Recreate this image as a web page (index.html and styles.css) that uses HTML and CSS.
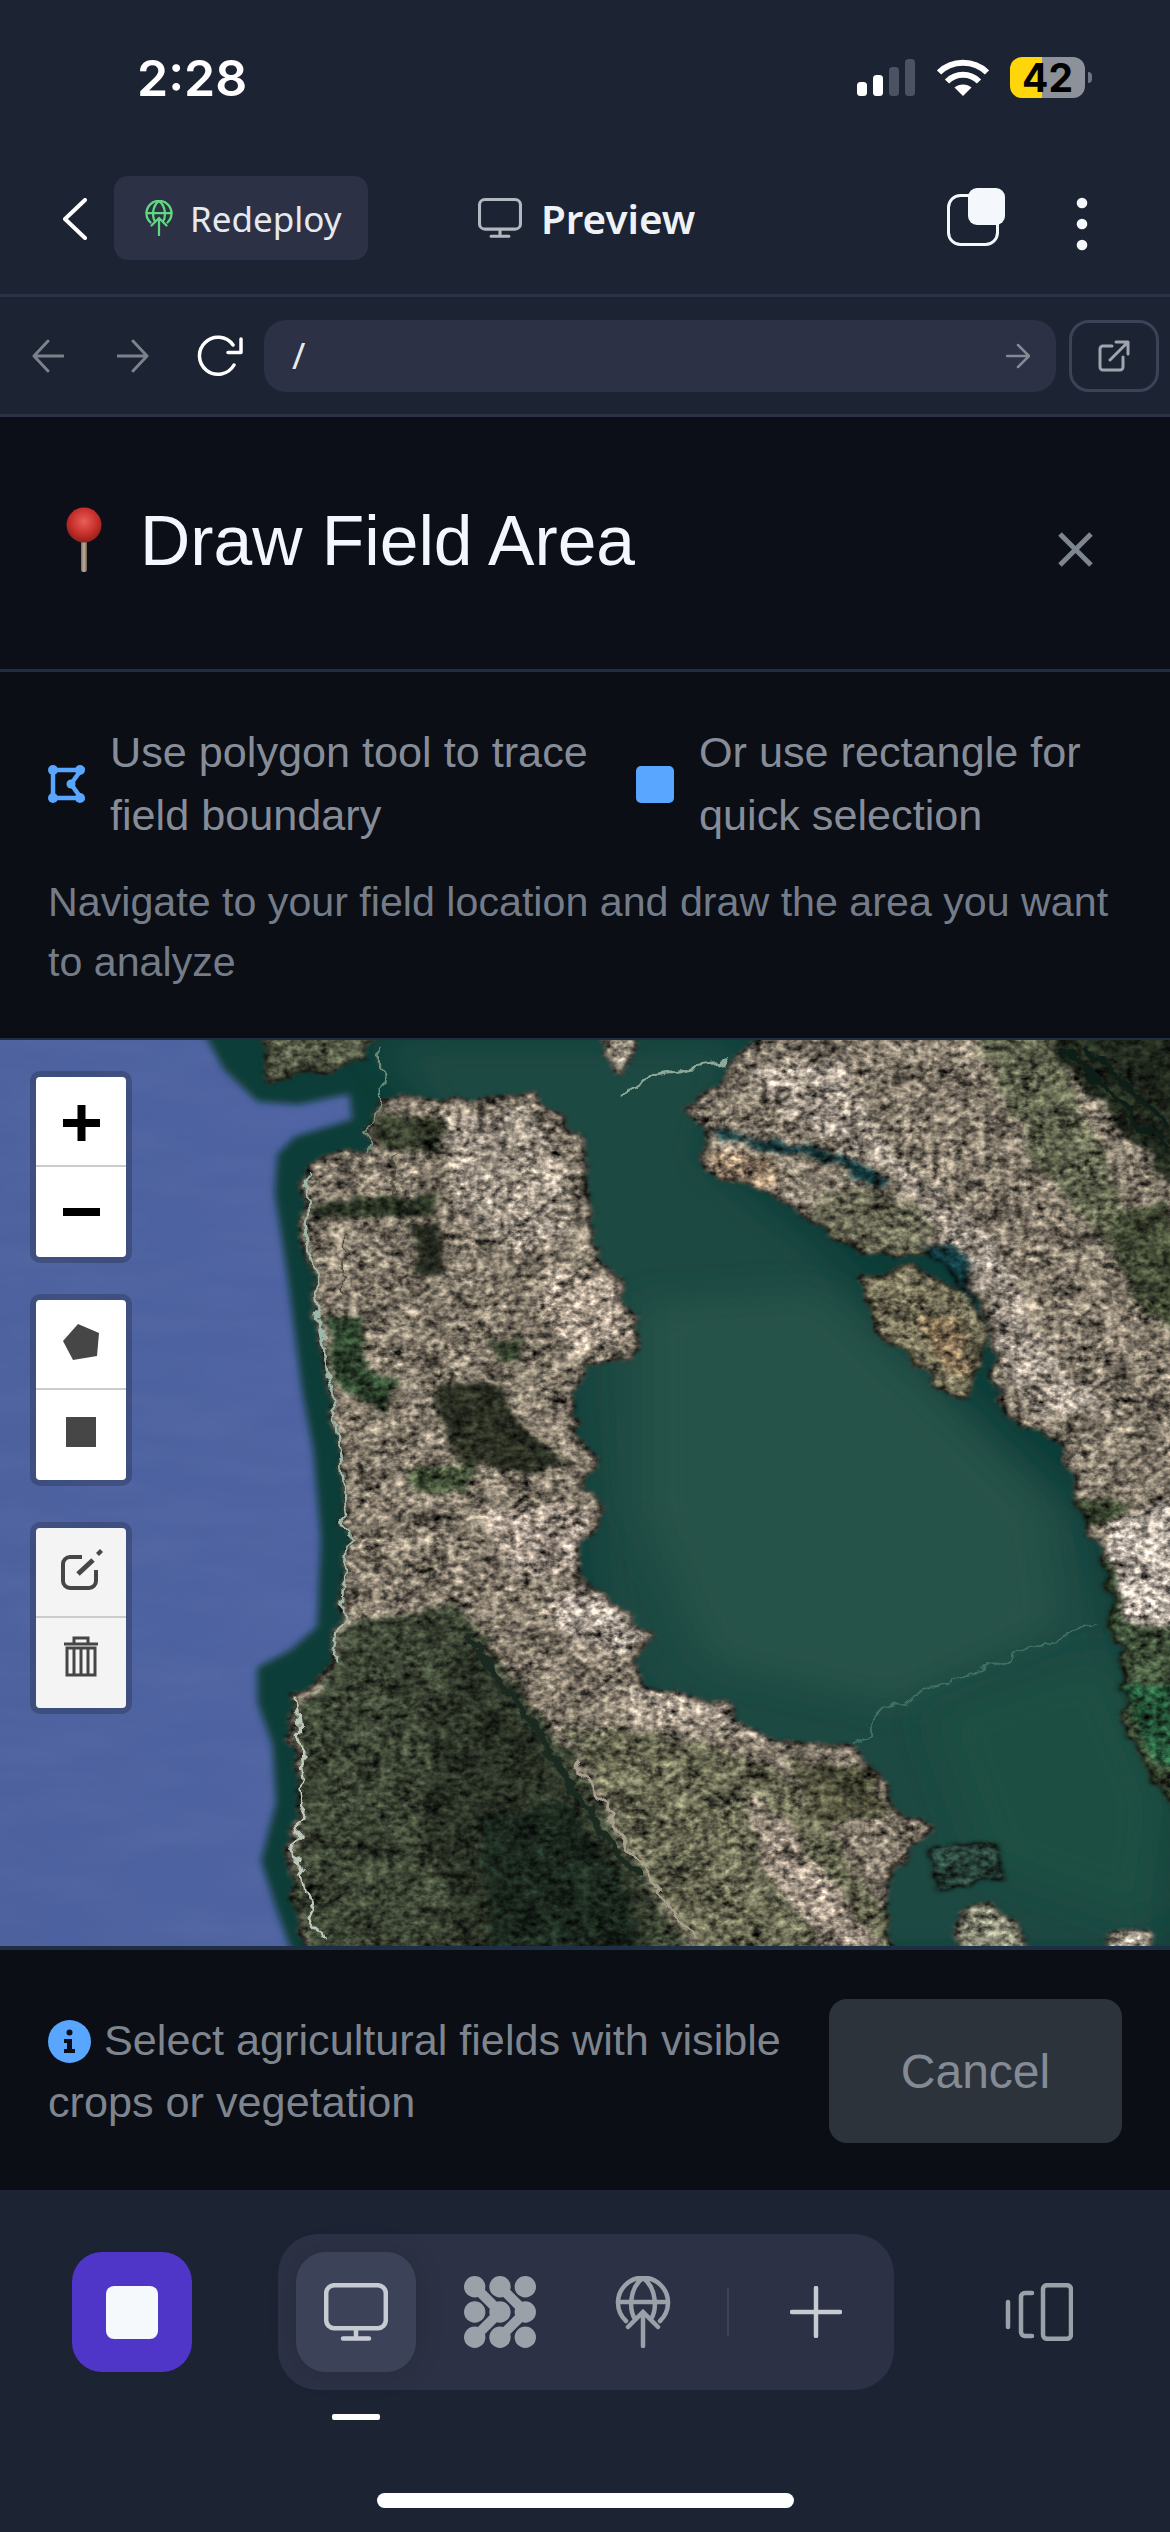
FILE: index.html
```html
<!DOCTYPE html>
<html>

<head>
	<title>Draw Field Area</title>
	<link rel="stylesheet" href="styles.css">
</head>

<body>
	<svg class="defs" width="0" height="0">
		<symbol id="globe-up" viewBox="0 0 56 72">
			<g fill="none" stroke="currentColor" stroke-width="4.500" stroke-linecap="round">
				<path d="M11 45A25 25 0 1 1 45 45" />
				<path d="M3 26H53" />
				<path d="M28 2C14 12 14 34 20 43M28 2C42 12 42 34 36 43" />
				<path d="M28 70V38M13 51L28 36L43 51" />
			</g>
		</symbol>
		<symbol id="monitor" viewBox="0 0 64 58">
			<g fill="none" stroke="currentColor" stroke-width="4.500" stroke-linecap="round">
				<rect x="2.200" y="2.200" width="59.600" height="43" rx="8" />
				<path d="M32 46V55.500M19 55.500H45" />
			</g>
		</symbol>
	</svg>

	<div class="status">
		<span class="time">2:28</span>
		<div class="status-icons">
			<svg class="signal" width="58" height="37" viewBox="0 0 58 37">
				<rect x="0" y="23" width="10" height="14" rx="3.500" fill="#fff" />
				<rect x="16" y="16" width="10" height="21" rx="3.500" fill="#fff" />
				<rect x="32" y="8" width="10" height="29" rx="3.500" fill="#4b5261" />
				<rect x="48" y="0" width="10" height="37" rx="3.500" fill="#4b5261" />
			</svg>
			<svg class="wifi" width="52" height="37" viewBox="0 0 52 37">
				<g fill="none" stroke="#fff" stroke-width="6">
					<path d="M2 13.500C15 .5 37 .5 50 13.500" />
					<path d="M10 22.500C19 13.500 33 13.500 42 22.500" />
				</g>
				<path d="M26 37L17.500 28.500C22 24.500 30 24.500 34.500 28.500Z" fill="#fff" />
			</svg>
			<div class="battery">42</div>
			<span class="battery-nub"></span>
		</div>
	</div>

	<header class="topbar">
		<svg class="back" width="24" height="42" viewBox="0 0 24 42">
			<path d="M22 2L2 21L22 40" fill="none" stroke="#fff" stroke-width="4" stroke-linecap="round" stroke-linejoin="round" />
		</svg>
		<div class="redeploy">
			<svg class="redeploy-icon" width="28" height="36"><use href="#globe-up" /></svg>
			<span>Redeploy</span>
		</div>
		<div class="preview">
			<svg class="preview-icon" width="44" height="40"><use href="#monitor" /></svg>
			<span>Preview</span>
		</div>
		<svg class="copy" width="58" height="58" viewBox="0 0 58 58">
			<rect x="1.500" y="7.500" width="49" height="49" rx="12" fill="none" stroke="#f4f8fc" stroke-width="3" />
			<rect x="21" y="0" width="37" height="37" rx="9" fill="#f4f8fc" />
		</svg>
		<svg class="dots" width="12" height="54" viewBox="0 0 12 54">
			<circle cx="6" cy="6" r="5.300" fill="#f4f8fc" />
			<circle cx="6" cy="27" r="5.300" fill="#f4f8fc" />
			<circle cx="6" cy="48" r="5.300" fill="#f4f8fc" />
		</svg>
	</header>

	<div class="urlbar">
		<svg class="nav-arrow" width="32" height="34" viewBox="0 0 32 34">
			<path d="M31 17H2M16 2L2 17L16 32" fill="none" stroke="#7d818a" stroke-width="3" stroke-linecap="round" stroke-linejoin="round" />
		</svg>
		<svg class="nav-arrow next" width="32" height="34" viewBox="0 0 32 34">
			<path d="M1 17H30M16 2L30 17L16 32" fill="none" stroke="#7d818a" stroke-width="3" stroke-linecap="round" stroke-linejoin="round" />
		</svg>
		<svg class="reload" width="46" height="42" viewBox="0 0 46 42">
			<g fill="none" stroke="#fff" stroke-width="3.500" stroke-linecap="round" stroke-linejoin="round">
				<path d="M37 30A18.500 18.500 0 1 1 36 10" />
				<path d="M31 17.500H44V4" />
			</g>
		</svg>
		<div class="url">
			<span class="url-text">/</span>
			<svg width="24" height="26" viewBox="0 0 24 26">
				<path d="M1 13H22M12 2L23 13L12 24" fill="none" stroke="#858994" stroke-width="2.500" stroke-linecap="round" stroke-linejoin="round" />
			</svg>
		</div>
		<div class="open-btn">
			<svg width="32" height="32" viewBox="0 0 32 32">
				<g fill="none" stroke="#9fa4ad" stroke-width="3" stroke-linecap="round" stroke-linejoin="round">
					<path d="M14 6H5a3 3 0 0 0 -3 3V27a3 3 0 0 0 3 3H22a3 3 0 0 0 3 -3V17" />
					<path d="M12 20L30 2M18 2H30V14" />
				</g>
			</svg>
		</div>
	</div>

	<section class="title-row">
		<svg class="pin" width="40" height="66" viewBox="0 0 40 66">
			<defs>
				<radialGradient id="ball" cx="0.5" cy="0.4" r="0.6">
					<stop offset="0" stop-color="#e8605a" />
					<stop offset="0.6" stop-color="#c9302c" />
					<stop offset="1" stop-color="#8e1f1c" />
				</radialGradient>
				<linearGradient id="stem" x1="0" x2="1" y1="0" y2="0">
					<stop offset="0" stop-color="#7c6a5c" />
					<stop offset="0.5" stop-color="#c2ad9a" />
					<stop offset="1" stop-color="#6b5b50" />
				</linearGradient>
			</defs>
			<rect x="17" y="32" width="6" height="33" rx="2" fill="url(#stem)" />
			<circle cx="20" cy="18" r="17.500" fill="url(#ball)" />
		</svg>
		<h1>Draw Field Area</h1>
		<svg class="close" width="35" height="35" viewBox="0 0 35 35">
			<path d="M2 2L33 33M33 2L2 33" stroke="#7d858f" stroke-width="5" />
		</svg>
	</section>

	<section class="help">
		<div class="tools">
			<div class="tool">
				<svg class="tool-icon" width="37" height="38" viewBox="0 0 37 38">
					<path d="M5 5H33L23 19L33 33H5Z" fill="none" stroke="#58a6ff" stroke-width="4.500" />
					<g fill="#58a6ff">
						<circle cx="5" cy="5" r="5" />
						<circle cx="32" cy="5" r="5" />
						<circle cx="23" cy="19" r="4.500" />
						<circle cx="32" cy="33" r="5" />
						<circle cx="5" cy="33" r="5" />
					</g>
				</svg>
				<span class="tool-text polygon-text">Use polygon tool to trace field boundary</span>
			</div>
			<div class="tool">
				<span class="square-icon"></span>
				<span class="tool-text">Or use rectangle for quick selection</span>
			</div>
		</div>
		<p class="hint">Navigate to your field location and draw the area you want to analyze</p>
	</section>

	<div class="map">
		<svg class="map-img" viewBox="0 0 1568 1545" preserveAspectRatio="none">
			<defs>
				<filter id="sat" filterUnits="userSpaceOnUse" x="-60" y="-60" width="1700" height="1680" color-interpolation-filters="sRGB">
					<feTurbulence type="fractalNoise" baseFrequency="0.03" numOctaves="3" seed="4" result="warp" />
					<feDisplacementMap in="SourceGraphic" in2="warp" scale="30" xChannelSelector="R" yChannelSelector="G" result="moved" />
					<feGaussianBlur in="moved" stdDeviation="4" result="smooth" />
					<feTurbulence type="fractalNoise" baseFrequency="0.1" numOctaves="3" seed="11" result="fine" />
					<feTurbulence type="fractalNoise" baseFrequency="0.025" numOctaves="3" seed="21" result="coarse" />
					<feComposite in="fine" in2="coarse" operator="arithmetic" k1="0" k2="0.6" k3="0.4" k4="0" result="mix" />
					<feColorMatrix in="mix" type="matrix" values="1.600 0 0 0 -0.300 1.600 0 0 0 -0.300 1.600 0 0 0 -0.300 0 0 0 0 1" result="grain" />
					<feComposite in="smooth" in2="grain" operator="arithmetic" k1="2" k2="0" k3="0" k4="0" />
					<feGaussianBlur stdDeviation="0.800" />
				</filter>
				<filter id="warped" filterUnits="userSpaceOnUse" x="-60" y="-60" width="1700" height="1680" color-interpolation-filters="sRGB">
					<feTurbulence type="fractalNoise" baseFrequency="0.03" numOctaves="3" seed="4" result="warp" />
					<feDisplacementMap in="SourceGraphic" in2="warp" scale="30" xChannelSelector="R" yChannelSelector="G" />
					<feGaussianBlur stdDeviation="0.800" />
				</filter>
				<filter id="soft" x="-20%" y="-20%" width="140%" height="140%">
					<feGaussianBlur stdDeviation="5" />
				</filter>
				<filter id="softer" x="-30%" y="-30%" width="160%" height="160%">
					<feGaussianBlur stdDeviation="28" />
				</filter>
				<filter id="haze" filterUnits="userSpaceOnUse" x="0" y="0" width="1568" height="1545" color-interpolation-filters="sRGB">
					<feTurbulence type="fractalNoise" baseFrequency="0.006 0.02" numOctaves="3" seed="7" result="noise" />
					<feColorMatrix in="noise" type="matrix" values="0 0 0 0 0.55 0 0 0 0 0.62 0 0 0 0 0.8 0.16 0 0 0 -0.05" result="tint" />
					<feComposite in="tint" in2="SourceAlpha" operator="in" result="cut" />
					<feMerge>
						<feMergeNode in="SourceGraphic" />
						<feMergeNode in="cut" />
					</feMerge>
				</filter>
				<linearGradient id="ocean" x1="0" x2="1" y1="0" y2="0">
					<stop offset="0" stop-color="#4c619e" />
					<stop offset="1" stop-color="#4f63a3" />
				</linearGradient>
			</defs>

			<rect width="520" height="1545" fill="url(#ocean)" filter="url(#haze)" />

			<!-- water: dark band along the coast, then the bay -->
			<path filter="url(#soft)" fill="#0d3d39" d="M270 -20L300 50L345 105L400 110L468 92L472 135L395 165L372 195L368 260L385 400L405 600L420 700L430 850L425 1000L390 1040L345 1070L345 1130L365 1200L370 1300L350 1400L370 1480L395 1570H1600V-20Z" />
			<path filter="url(#softer)" fill="#1a4842" d="M500 0H1000L940 200L1100 360L1300 620L1450 800L1500 1000L1568 1300V1560H1100L800 1000L760 400Z" />
			<path filter="url(#softer)" fill="#27524a" d="M860 450L1100 430L1280 650L1400 800L1420 1000L1200 1130L950 1060L860 800Z" />
			<path filter="url(#softer)" fill="#1c4f42" d="M1250 1150L1480 1050L1560 1300L1540 1500L1320 1400Z" />

			<g filter="url(#sat)">
				<!-- city peninsula -->
				<path fill="#7f7668" d="M510 95L600 105L700 92L745 120L775 175L785 240L790 300L800 370L830 410L830 450L860 480L850 530L790 555L765 600L770 680L800 725L775 760L810 790L800 830L765 870L790 930L830 975L870 1015L850 1060L860 1110L980 1130L985 1165L1040 1195L1140 1205L1190 1270L1190 1310L1245 1335L1230 1370L1190 1440L1180 1480L1200 1580H420L395 1470L390 1380L405 1280L390 1200L395 1120L435 1090L450 1040L465 860L455 700L430 500L405 300L405 225L440 195L490 190Z" />
				<!-- east bay -->
				<path fill="#7f7668" d="M985 40L1050 -30H1620V1000L1500 1000L1490 900L1480 860L1455 840L1470 800L1445 770L1420 680L1350 640L1325 570L1340 510L1310 460L1300 400L1240 340L1170 365L1120 340L1090 300L1040 270L1030 250L950 230L940 200L950 150L910 120L960 90Z" />
				<path fill="#3f4f38" d="M1500 1000H1620V1350L1560 1290L1510 1180Z" />
				<!-- alameda and the airport lobe -->
				<path fill="#62614f" d="M1100 262L1160 250L1230 280L1255 320L1230 370L1170 365L1120 340L1090 300Z" />
				<path fill="#6f6a54" d="M1150 410L1220 385L1290 430L1320 500L1295 610L1270 600L1190 510Z" />
				<!-- marin and the small islands -->
				<path fill="#4d5240" d="M345 -30H510L490 30L360 75Z" />
				<path fill="#8e8678" d="M805 -20L840 -20L848 40L830 65Z" />
				<path fill="#7d7d6c" d="M1290 1490L1330 1470L1370 1520L1385 1580H1290Z" />
				<path fill="#a0988a" d="M1480 1530L1540 1515L1550 1580H1480Z" />
				<path fill="#29433a" d="M1250 1375L1335 1370L1340 1430L1260 1450Z" />

				<!-- dark hills and parks -->
				<path fill="#2a3324" d="M418 275L580 262L582 298L420 308Z" />
				<path fill="#343a2a" d="M510 125L600 135L600 180L500 195Z" />
				<path fill="#20241b" d="M555 320L590 315L590 410L560 400Z" />
				<path fill="#2b3f2a" d="M435 470L492 475L492 560L530 575L510 630L450 590Z" />
				<path fill="#2a2e22" d="M590 590L660 580L700 660L770 720L700 740L620 720L580 620Z" />
				<path fill="#2f3a28" d="M660 510L705 505L700 540L670 560Z" />
				<path fill="#445238" d="M540 730L640 725L620 770L550 770Z" />
				<path fill="#3a4232" d="M470 990L610 960L760 1210L935 1580H430L395 1470L405 1280L395 1140L440 1090Z" />
				<path fill="#293024" d="M610 1010L720 1170L860 1470L880 1580H640L560 1300L600 1150Z" />
				<path fill="#1a261c" d="M640 1320L760 1300L830 1420L860 1550L660 1560Z" />
				<path fill="#64644f" d="M760 1170L950 1200L1060 1260L1180 1480L1200 1580H950L850 1400Z" />
				<path fill="#4d4d3a" d="M1060 1230L1170 1240L1185 1320L1100 1340Z" />

				<!-- hills on the east side -->
				<path fill="#1f261b" d="M1380 -30H1620V300L1520 180Z" />
				<path fill="#5c5f4a" d="M1300 -30H1400L1500 260L1568 440L1568 500L1480 350L1380 190Z" />
				<path fill="#3f4632" d="M1480 300L1560 270L1620 500L1530 470Z" />
				<path fill="#3a4430" d="M1440 780L1520 790L1490 820L1460 830Z" />
				<path fill="#2f3f2a" d="M1480 880L1510 890L1530 1000L1495 1000Z" />
				<path fill="#245337" d="M1500 1100L1620 1100V1280L1540 1220Z" />
				<path fill="#0e3034" d="M950 150L1050 175L1130 195L1190 240L1185 255L1120 215L1040 185L955 165Z" />
				<path fill="#103338" d="M1240 345L1290 350L1305 460L1280 400Z" />

				<!-- bright built up bits -->
				<path fill="#9a9084" d="M1000 50L1120 30L1200 200L1330 340L1420 560L1500 640L1400 640L1340 560L1310 400L1190 220L1050 130Z" />
				<path fill="#b3a99e" d="M1480 830L1568 780L1620 1000H1510Z" />
				<path fill="#a08a72" d="M950 190L1030 195L1045 250L960 232Z" />
				<path fill="#8f7a5c" d="M1230 470L1290 480L1300 570L1260 560Z" />
				<path fill="#958b7e" d="M590 130L700 110L760 200L770 320L700 370L610 300Z" />
				<path fill="#a39687" d="M740 380L820 420L850 500L780 540L720 460Z" />
				<path fill="#9f9286" d="M640 800L790 790L770 900L690 920Z" />
				<path fill="#aca195" d="M735 950L790 940L865 1015L840 1050L760 1020Z" />
				<path fill="#998e80" d="M820 1100L975 1130L985 1170L1050 1200L960 1190L860 1160Z" />
				<path fill="#968a7c" d="M1000 1280L1060 1340L1150 1500L1180 1545L1100 1545L1020 1400Z" />
			</g>

			<!-- thin lines over the land and water, warped the same way as the land -->
			<g fill="none" filter="url(#warped)">
				<path d="M408 232L415 330L428 470L450 640L465 850L458 990L448 1060" stroke="#9db8a8" stroke-width="3.500" />
				<path d="M398 1125L403 1230L408 1290L395 1380L413 1470L433 1530" stroke="#bcc8ba" stroke-width="3.500" />
				<path d="M488 190L512 100L510 20" stroke="#6f8d76" stroke-width="3" />
				<path d="M830 92L880 55L980 35" stroke="#8fa898" stroke-width="5" />
				<path d="M1470 995L1300 1080L1200 1130L1145 1205" stroke="#3f7265" stroke-width="3" />
				<path d="M770 1230L860 1410L930 1530" stroke="#a89f8e" stroke-width="4" />
				<path d="M625 1010L720 1180L850 1430" stroke="#1b2a20" stroke-width="10" />
				<path d="M1420 10L1568 190M1450 10L1568 150" stroke="#0d1e18" stroke-width="8" />
				<path d="M460 330L462 430M528 200L528 280" stroke="#4d4a3c" stroke-width="2" />
			</g>
		</svg>

		<div class="map-controls">
			<div class="ctl-group">
				<a class="ctl">
					<svg width="90" height="88" viewBox="0 0 90 88"><path d="M27 42H64V50H27ZM41.500 28H49.500V64H41.500Z" /></svg>
				</a>
				<a class="ctl">
					<svg width="90" height="90" viewBox="0 0 90 90"><rect x="27" y="41" width="37" height="8" /></svg>
				</a>
			</div>
			<div class="ctl-group">
				<a class="ctl">
					<svg width="90" height="88" viewBox="0 0 90 88"><path d="M27 41L42 24L63 33L61 56L37 60Z" fill="#464646" /></svg>
				</a>
				<a class="ctl">
					<svg width="90" height="90" viewBox="0 0 90 90"><rect x="30" y="27" width="30" height="30" fill="#464646" /></svg>
				</a>
			</div>
			<div class="ctl-group ctl-off">
				<a class="ctl">
					<svg width="90" height="88" viewBox="0 0 90 88">
						<g fill="none" stroke="#464646" stroke-width="4">
							<path d="M46 29H34a7 7 0 0 0 -7 7V53a7 7 0 0 0 7 7H53a7 7 0 0 0 7 -7V42" />
							<path d="M42 46L57 32" stroke-width="5" />
						</g>
						<path d="M60 25L64 21L67 24L63 28Z" fill="#464646" />
					</svg>
				</a>
				<a class="ctl">
					<svg width="90" height="90" viewBox="0 0 90 90">
						<g fill="none" stroke="#464646" stroke-width="3">
							<path d="M28 26H62M38 26V20H52V26" />
							<path d="M31 30H59V57H31ZM38 30V57M45 30V57M52 30V57" />
						</g>
					</svg>
				</a>
			</div>
		</div>
	</div>

	<section class="map-foot">
		<p class="note">
			<svg class="info" width="43" height="43" viewBox="0 0 43 43">
				<circle cx="21.500" cy="21.500" r="21.500" fill="#58a6ff" />
				<circle cx="21.500" cy="12.500" r="3" fill="#0b0e14" />
				<path d="M16 19H24V29H27V33H16V29H19V23H16Z" fill="#0b0e14" />
			</svg>
			Select agricultural fields with visible crops or vegetation
		</p>
		<button class="cancel">Cancel</button>
	</section>

	<nav class="dock">
		<div class="dock-row">
			<div class="stop"><span></span></div>
			<div class="dock-pill">
				<div class="dock-item active">
					<svg class="dock-monitor" width="64" height="58"><use href="#monitor" /></svg>
				</div>
				<div class="dock-item">
					<svg width="72" height="72" viewBox="0 0 72 72">
						<g fill="#9ba1a8">
							<circle cx="10.700" cy="10.700" r="10.700" />
							<circle cx="36" cy="10.700" r="10.700" />
							<circle cx="61.300" cy="10.700" r="10.700" />
							<circle cx="10.700" cy="36" r="10.700" />
							<circle cx="36" cy="36" r="10.700" />
							<circle cx="61.300" cy="36" r="10.700" />
							<circle cx="10.700" cy="61.300" r="10.700" />
							<circle cx="36" cy="61.300" r="10.700" />
							<circle cx="61.300" cy="61.300" r="10.700" />
						</g>
						<g fill="none" stroke="#9ba1a8" stroke-width="10" stroke-linejoin="round">
							<path d="M10.700 10.700L36 36L10.700 61.300" />
							<path d="M36 10.700L61.300 36L36 61.300" />
						</g>
					</svg>
				</div>
				<div class="dock-item">
					<svg class="dock-globe" width="56" height="72"><use href="#globe-up" /></svg>
				</div>
				<span class="dock-sep"></span>
				<div class="dock-item dock-plus">
					<svg width="52" height="52" viewBox="0 0 52 52">
						<path d="M2 26H50M26 2V50" stroke="#c7ccd3" stroke-width="4.500" stroke-linecap="round" />
					</svg>
				</div>
			</div>
			<svg class="dock-device" width="68" height="58" viewBox="0 0 68 58">
				<g fill="none" stroke="#9ba1a8" stroke-width="4.500" stroke-linecap="round">
					<rect x="38" y="2.200" width="28" height="53.600" rx="4" />
					<path d="M27 10H20a4 4 0 0 0 -4 4V49a4 4 0 0 0 4 4H27" />
					<path d="M3 19V44" />
				</g>
			</svg>
		</div>
		<span class="dock-mark"></span>
		<span class="home-bar"></span>
	</nav>
</body>

</html>
```

FILE: styles.css
```css
* {
	box-sizing: border-box;
}

body {
	margin: 0;
	width: 1170px;
	height: 2532px;
	overflow: hidden;
	background: #1c2333;
	font-family: "Liberation Sans", Arial, sans-serif;
}

.defs {
	position: absolute;
}

svg {
	display: block;
	flex: none;
}

/* status bar */
.status {
	height: 150px;
	display: flex;
	align-items: flex-start;
	padding: 50px 0 0 137px;
}

.time {
	font-family: Inter, sans-serif;
	font-size: 50px;
	font-weight: 600;
	line-height: 56px;
	color: #fff;
}

.status-icons {
	margin-left: auto;
	margin-top: 7px;
	padding-right: 78px;
	display: flex;
	align-items: center;
}

.wifi {
	margin-left: 22px;
}

.battery {
	margin-left: 21px;
	width: 75px;
	height: 41px;
	border-radius: 12px;
	background: linear-gradient(to right, #ffd60a 43%, #8d9199 43%);
	font-family: Inter, sans-serif;
	font-size: 39px;
	font-weight: 700;
	line-height: 41px;
	text-align: center;
	color: #000;
}

.battery-nub {
	margin-left: 3px;
	width: 4px;
	height: 11px;
	border-radius: 0 6px 6px 0;
	background: #6f7480;
}

/* top bar */
.topbar {
	height: 147px;
	border-bottom: 3px solid #2c3145;
	display: flex;
	align-items: flex-start;
	padding-top: 26px;
	position: relative;
}

.back {
	margin: 22px 0 0 63px;
}

.redeploy {
	margin-left: 27px;
	width: 254px;
	height: 84px;
	border-radius: 14px;
	background: #2c3145;
	display: flex;
	align-items: center;
	padding-left: 31px;
	font-family: "Noto Sans", sans-serif;
	font-size: 35px;
	color: #e6e9ee;
}

.redeploy-icon {
	color: #5fd97f;
	margin-right: 17px;
}

.preview {
	margin-left: 110px;
	height: 84px;
	display: flex;
	align-items: center;
	font-family: "Noto Sans", sans-serif;
	font-size: 40.400px;
	font-weight: 600;
	color: #eef2f6;
}

.preview-icon {
	color: #b3b8c0;
	margin-right: 19px;
}

.copy {
	margin: 12px 0 0 auto;
}

.dots {
	margin: 21px 82px 0 71px;
}

/* url bar */
.urlbar {
	height: 120px;
	border-bottom: 3px solid #2c3145;
	display: flex;
	align-items: center;
	padding-left: 32px;
}

.nav-arrow.next {
	margin-left: 53px;
}

.reload {
	margin-left: 48px;
}

.url {
	margin-left: 21px;
	width: 792px;
	height: 72px;
	border-radius: 22px;
	background: #2c3145;
	display: flex;
	align-items: center;
	justify-content: space-between;
	padding: 0 26px 0 28px;
}

.url-text {
	font-family: "Noto Sans", sans-serif;
	font-size: 36px;
	color: #e8ebef;
}

.open-btn {
	margin-left: 13px;
	width: 90px;
	height: 72px;
	border: 3px solid #3c4359;
	border-radius: 20px;
	display: flex;
	align-items: center;
	justify-content: center;
}

/* panel */
.title-row {
	height: 255px;
	background: #0c0f17;
	border-bottom: 3px solid #1e2f44;
	display: flex;
	align-items: flex-start;
	padding: 90px 77px 0 64px;
}

.title-row h1 {
	margin: -5px 0 0 36px;
	font-size: 69.600px;
	font-weight: 400;
	line-height: 78px;
	color: #f3f6fd;
}

.close {
	margin: 25px 0 0 auto;
}

.help {
	height: 368px;
	background: #0b0e14;
	border-bottom: 2px solid #1e2f44;
	padding: 49px 48px 0;
}

.tools {
	display: flex;
}

.tool {
	display: flex;
	align-items: center;
	font-size: 43.200px;
	line-height: 63px;
	color: #868d99;
}

.tool-icon {
	margin-right: 25px;
}

.polygon-text {
	width: 526px;
}

.square-icon {
	flex: none;
	width: 38px;
	height: 37px;
	border-radius: 5px;
	background: #58a6ff;
	margin-right: 25px;
}

.hint {
	margin: 25px 0 0;
	font-size: 41.200px;
	line-height: 60px;
	color: #747c89;
}

.map {
	height: 906px;
	position: relative;
	background: #4f64a2;
}

.map-img {
	width: 1170px;
	height: 906px;
}

.map-controls {
	position: absolute;
	left: 30px;
	top: 31px;
	display: flex;
	flex-direction: column;
	gap: 31px;
}

.ctl-group {
	width: 102px;
	border: 6px solid rgba(0, 0, 0, 0.2);
	border-radius: 10px;
	background-clip: padding-box;
	overflow: hidden;
}

.ctl-group:last-child {
	margin-top: 5px;
}

.ctl {
	display: block;
	background: #fff;
}

.ctl:first-child {
	border-bottom: 2px solid #ccc;
}

.ctl-off .ctl {
	background: #f4f4f4;
}

/* footer of the panel */
.map-foot {
	height: 244px;
	background: #0b0e14;
	border-top: 4px solid #1e2f44;
	display: flex;
	align-items: center;
	padding: 2px 48px 0;
	justify-content: space-between;
}

.note {
	margin: 0;
	width: 750px;
	font-size: 43.200px;
	line-height: 62px;
	color: #7e858f;
}

.info {
	display: inline-block;
	vertical-align: -8px;
	margin-right: 1px;
}

.cancel {
	width: 293px;
	height: 144px;
	border: 0;
	border-radius: 18px;
	background: #2c333b;
	font-family: inherit;
	font-size: 48px;
	color: #848b96;
}

/* dock */
.dock {
	height: 342px;
	padding-top: 44px;
	background: #1c2333;
	display: flex;
	flex-direction: column;
}

.dock-row {
	display: flex;
	align-items: center;
	padding-left: 72px;
}

.stop {
	width: 120px;
	height: 120px;
	border-radius: 30px;
	background: #5035c9;
	display: flex;
	align-items: center;
	justify-content: center;
}

.stop span {
	width: 52px;
	height: 53px;
	border-radius: 8px;
	background: #f5f9fc;
}

.dock-pill {
	margin-left: 86px;
	width: 616px;
	height: 156px;
	border-radius: 40px;
	background: #2c3145;
	display: flex;
	align-items: center;
	gap: 24px;
	padding: 0 18px;
}

.dock-item {
	width: 120px;
	height: 120px;
	border-radius: 30px;
	display: flex;
	align-items: center;
	justify-content: center;
}

.dock-plus {
	margin-left: 3px;
}

.dock-item.active {
	background: #3c4359;
	box-shadow: 0 0 30px rgba(0, 0, 0, 0.12);
}

.dock-monitor {
	color: #c7ccd3;
}

.dock-globe {
	color: #9ba1a8;
}

.dock-sep {
	width: 2px;
	height: 48px;
	background: #3c4359;
}

.dock-device {
	margin-left: 111px;
}

.dock-mark {
	margin: 24px 0 0 332px;
	width: 48px;
	height: 6px;
	border-radius: 2px;
	background: #fff;
}

.home-bar {
	margin: 73px 0 0 377px;
	width: 417px;
	height: 15px;
	border-radius: 8px;
	background: #fff;
}
```
